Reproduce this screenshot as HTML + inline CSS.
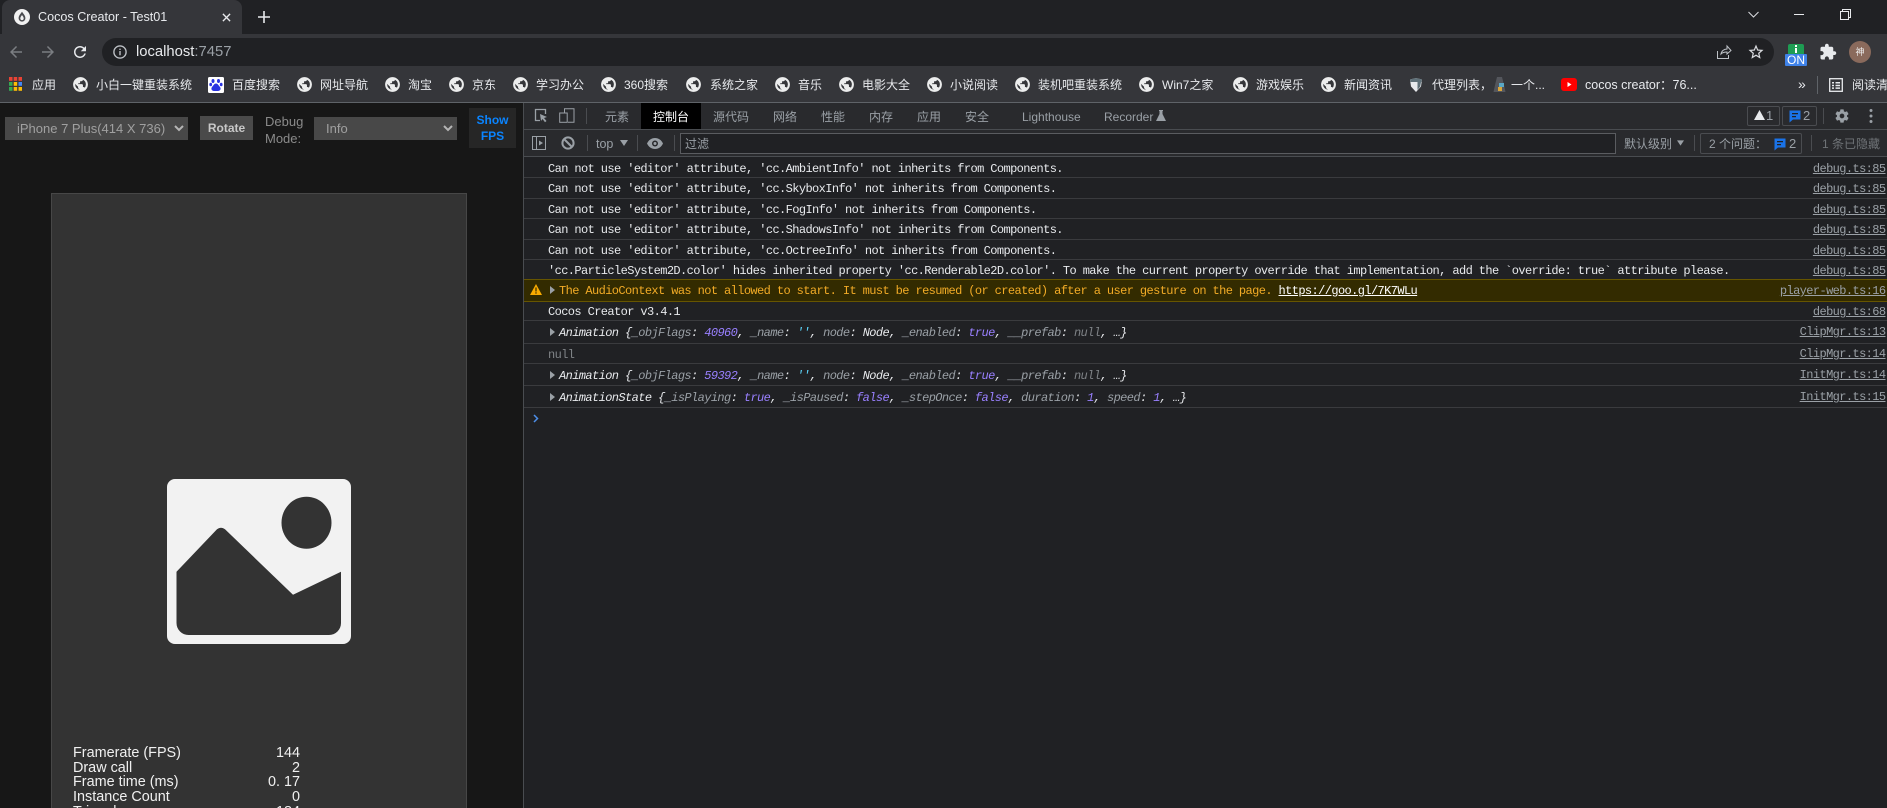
<!DOCTYPE html>
<html><head><meta charset="utf-8"><title>Cocos Creator - Test01</title>
<style>
html,body{margin:0;padding:0;width:1887px;height:808px;overflow:hidden;background:#202124}
body{position:relative;font-family:"Liberation Sans","Noto Sans CJK SC",sans-serif;font-size:12px;color:#e8eaed}
div,span.a,svg.a{position:absolute}
.t{position:absolute;white-space:nowrap;line-height:16px;height:16px}
.bm{color:#e8eaed;font-size:12px;top:77px}
.g{position:absolute;top:76px;width:17px;height:17px}
.dt{color:#9aa0a6;font-size:12px;top:109px}
.l{position:absolute;left:548px;white-space:pre;font-family:"Liberation Mono",monospace;font-size:12px;letter-spacing:-.6px;line-height:16px;height:16px;color:#e8eaed}
.li{font-style:italic}
.r{position:absolute;right:1.500px;white-space:pre;font-family:"Liberation Mono",monospace;font-size:12px;letter-spacing:-.6px;line-height:16px;color:#9aa0a6;text-decoration:underline}
.h{position:absolute;left:524px;right:0;height:1px;background:#3a3b3e}
.p{color:#9aa0a6}.n{color:#9980ff}.s{color:#5cd5fb}.w{color:#e8eaed}.k{color:#7f8387}
.arr{position:absolute;left:550px;width:0;height:0;border-left:5px solid #9aa0a6;border-top:4px solid transparent;border-bottom:4px solid transparent}
.sep{position:absolute;width:1px;background:#4a4c50}
.st{position:absolute;left:73px;color:#f0f0f0;font-size:14.4px;line-height:15px;white-space:nowrap}
.sv{position:absolute;right:1587px;color:#f0f0f0;font-size:14.4px;line-height:15px;white-space:pre}
.sel{position:absolute;background:#484848;top:117px;height:23px;color:#a0a0a0;font-size:13px;line-height:23px}
</style></head><body>
<svg width="0" height="0" style="position:absolute"><defs>
<symbol id="globe" viewBox="0 0 24 24"><path fill="#eceded" stroke="#eceded" stroke-width=".9" d="M12 2C6.48 2 2 6.48 2 12s4.48 10 10 10 10-4.48 10-10S17.52 2 12 2zm-1 17.93c-3.95-.49-7-3.85-7-7.93 0-.62.08-1.21.21-1.79L9 15v1c0 1.1.9 2 2 2v1.93zm6.9-2.54c-.26-.81-1-1.39-1.9-1.39h-1v-3c0-.55-.45-1-1-1H8v-2h2c.55 0 1-.45 1-1V7h2c1.1 0 2-.9 2-2v-.41c2.93 1.19 5 4.06 5 7.41 0 2.08-.8 3.97-2.1 5.39z"/></symbol>
<symbol id="msg" viewBox="0 0 12 13"><path fill="#1a73e8" d="M.5.5h11v9H4L.5 12.500z"/><path fill="#202124" d="M3 3h6v1.300H3zM3 6h4v1.300H3z"/></symbol>
</defs></svg>

<!-- tab strip -->
<div style="left:0;top:0;width:1887px;height:34px;background:#202124"></div>
<div style="left:2px;top:0;width:240px;height:34px;background:#35363a;border-radius:8px 8px 0 0"></div>
<svg class="a" style="left:14px;top:9px" width="16" height="16" viewBox="0 0 16 16"><circle cx="8" cy="8" r="8" fill="#f1f1f1"/><path d="M8 2.8C6.2 5.2 4.6 7 4.6 9.2a3.4 3.4 0 0 0 6.8 0C11.4 7 9.8 5.2 8 2.8z" fill="#4a4b4f"/><path d="M8 6C7 7.4 6.3 8.3 6.3 9.4a1.7 1.7 0 0 0 3.4 0C9.7 8.3 9 7.4 8 6z" fill="#f1f1f1"/></svg>
<span class="t" style="left:38px;top:9px;font-size:12.6px;color:#e8eaed">Cocos Creator - Test01</span>
<svg class="a" style="left:222px;top:13px" width="9" height="9" viewBox="0 0 10 10"><path d="M1 1l8 8M9 1L1 9" stroke="#e8eaed" stroke-width="1.5"/></svg>
<svg class="a" style="left:258px;top:11px" width="12" height="12" viewBox="0 0 12 12"><path d="M6 0v12M0 6h12" stroke="#e8eaed" stroke-width="1.6"/></svg>
<svg class="a" style="left:1748px;top:11px" width="11" height="7" viewBox="0 0 11 7"><path d="M.5 1l5 5 5-5" stroke="#dadce0" fill="none"/></svg>
<div style="left:1794px;top:14px;width:10px;height:1px;background:#e8eaed"></div>
<svg class="a" style="left:1840px;top:9px" width="11" height="11" viewBox="0 0 11 11"><path d="M.5 2.500h8v8h-8zM2.500 2.500v-2h8v8h-2" stroke="#e8eaed" fill="none"/></svg>

<!-- toolbar -->
<div style="left:0;top:34px;width:1887px;height:68px;background:#35363a"></div>
<div style="left:102px;top:38px;width:1672px;height:28px;background:#202124;border-radius:14px"></div>
<svg class="a" style="left:7px;top:43px" width="18" height="18" viewBox="0 0 24 24"><path fill="#7b7e82" d="M20 11H7.83l5.59-5.59L12 4l-8 8 8 8 1.41-1.41L7.83 13H20v-2z"/></svg>
<svg class="a" style="left:39px;top:43px" width="18" height="18" viewBox="0 0 24 24"><path fill="#7b7e82" d="M4 11h12.17l-5.59-5.59L12 4l8 8-8 8-1.41-1.41L16.17 13H4v-2z"/></svg>
<svg class="a" style="left:71px;top:43px" width="18" height="18" viewBox="0 0 24 24"><path fill="#e8eaed" d="M17.65 6.35C16.2 4.9 14.21 4 12 4c-4.42 0-7.99 3.58-7.99 8s3.57 8 7.99 8c3.73 0 6.84-2.55 7.73-6h-2.08c-.82 2.33-3.04 4-5.65 4-3.31 0-6-2.69-6-6s2.69-6 6-6c1.66 0 3.14.69 4.22 1.78L13 11h7V4l-2.35 2.35z"/></svg>
<svg class="a" style="left:113px;top:45px" width="14" height="14" viewBox="0 0 14 14"><circle cx="7" cy="7" r="6.1" stroke="#bdc1c6" stroke-width="1.4" fill="none"/><path d="M6.3 6h1.4v4.2H6.3zM6.3 3.6h1.4V5H6.3z" fill="#bdc1c6"/></svg>
<span class="t" style="left:136px;top:44px;font-size:14.8px;color:#e8eaed">localhost<span style="color:#9aa0a6">:7457</span></span>
<svg class="a" style="left:1716px;top:44px" width="16" height="16" viewBox="0 0 16 16"><path d="M1.5 7v7.5h11V11M5 10c.5-3 3-5 6-5V2l4 4.5L11 10V8C8.500 8 6.500 8.500 5 10z" stroke="#bdc1c6" fill="none" stroke-width="1"/></svg>
<svg class="a" style="left:1747px;top:43px" width="18" height="18" viewBox="0 0 24 24"><path fill="#dadce0" d="M22 9.24l-7.19-.62L12 2 9.19 8.63 2 9.24l5.46 4.73L5.82 21 12 17.27 18.18 21l-1.63-7.03L22 9.24zM12 15.4l-3.76 2.27 1-4.28-3.32-2.88 4.38-.38L12 6.100l1.71 4.04 4.38.38-3.32 2.88 1 4.28L12 15.4z"/></svg>
<div style="left:1788px;top:44px;width:16px;height:10px;background:#1e9c53;border-radius:2px 2px 0 0"></div>
<div style="left:1795px;top:45px;width:2px;height:2px;background:#fff"></div>
<div style="left:1795px;top:48px;width:2px;height:5px;background:#fff"></div>
<div style="left:1785px;top:54px;width:22px;height:12px;background:#3f82e8;border-radius:1px;color:#fff;font-size:12px;line-height:12px;text-align:center">ON</div>
<svg class="a" style="left:1819px;top:43px" width="18" height="18" viewBox="0 0 24 24"><path fill="#e8eaed" d="M20.5 11H19V7c0-1.100-.9-2-2-2h-4V3.500C13 2.120 11.880 1 10.500 1S8 2.120 8 3.500V5H4c-1.100 0-1.990.9-1.990 2v3.800H3.500c1.490 0 2.700 1.210 2.700 2.700s-1.210 2.700-2.700 2.700H2V20c0 1.100.9 2 2 2h3.800v-1.500c0-1.490 1.210-2.700 2.700-2.700 1.490 0 2.700 1.210 2.700 2.700V22H17c1.100 0 2-.9 2-2v-4h1.500c1.380 0 2.500-1.120 2.500-2.500S21.880 11 20.500 11z"/></svg>
<div style="left:1849px;top:41px;width:22px;height:22px;border-radius:50%;background:#8a6a5c;color:#eee;font-size:9px;line-height:22px;text-align:center">神</div>

<!-- bookmarks -->
<svg class="a" style="left:9px;top:77px" width="13" height="14" viewBox="0 0 13 14">
<rect x="0" y="0" width="3.500" height="3.800" fill="#ea4335"/><rect x="4.700" y="0" width="3.500" height="3.800" fill="#ea4335"/><rect x="9.500" y="0" width="3.500" height="3.800" fill="#ea4335"/>
<rect x="0" y="5" width="3.500" height="3.800" fill="#34a853"/><rect x="4.700" y="5" width="3.500" height="3.800" fill="#fbbc05"/><rect x="9.500" y="5" width="3.500" height="3.800" fill="#4285f4"/>
<rect x="0" y="10" width="3.500" height="3.800" fill="#34a853"/><rect x="4.700" y="10" width="3.500" height="3.800" fill="#fbbc05"/><rect x="9.500" y="10" width="3.500" height="3.800" fill="#fbbc05"/></svg>
<span class="t bm" style="left:32px">应用</span>
<svg class="g" style="left:72px"><use href="#globe"/></svg><span class="t bm" style="left:96px">小白一键重装系统</span>
<svg class="a" style="left:208px;top:77px" width="16" height="16" viewBox="0 0 16 16"><rect width="16" height="16" rx="1.500" fill="#fff"/><ellipse cx="5" cy="4" rx="1.500" ry="2" fill="#2932e1"/><ellipse cx="10.500" cy="4" rx="1.500" ry="2" fill="#2932e1"/><ellipse cx="2.700" cy="7.500" rx="1.400" ry="1.800" fill="#2932e1"/><ellipse cx="13.200" cy="7.500" rx="1.400" ry="1.800" fill="#2932e1"/><path d="M8 6.500c-2 0-2.500 2-4 3.500-1.500 2 0 4 2 4h4c2 0 3.500-2 2-4-1.500-1.500-2-3.500-4-3.500z" fill="#2932e1"/></svg>
<span class="t bm" style="left:232px">百度搜索</span>
<svg class="g" style="left:296px"><use href="#globe"/></svg><span class="t bm" style="left:320px">网址导航</span>
<svg class="g" style="left:384px"><use href="#globe"/></svg><span class="t bm" style="left:408px">淘宝</span>
<svg class="g" style="left:448px"><use href="#globe"/></svg><span class="t bm" style="left:472px">京东</span>
<svg class="g" style="left:512px"><use href="#globe"/></svg><span class="t bm" style="left:536px">学习办公</span>
<svg class="g" style="left:600px"><use href="#globe"/></svg><span class="t bm" style="left:624px">360搜索</span>
<svg class="g" style="left:685px"><use href="#globe"/></svg><span class="t bm" style="left:710px">系统之家</span>
<svg class="g" style="left:774px"><use href="#globe"/></svg><span class="t bm" style="left:798px">音乐</span>
<svg class="g" style="left:838px"><use href="#globe"/></svg><span class="t bm" style="left:862px">电影大全</span>
<svg class="g" style="left:926px"><use href="#globe"/></svg><span class="t bm" style="left:950px">小说阅读</span>
<svg class="g" style="left:1014px"><use href="#globe"/></svg><span class="t bm" style="left:1038px">装机吧重装系统</span>
<svg class="g" style="left:1138px"><use href="#globe"/></svg><span class="t bm" style="left:1162px">Win7之家</span>
<svg class="g" style="left:1232px"><use href="#globe"/></svg><span class="t bm" style="left:1256px">游戏娱乐</span>
<svg class="g" style="left:1320px"><use href="#globe"/></svg><span class="t bm" style="left:1344px">新闻资讯</span>
<svg class="a" style="left:1409px;top:77px" width="14" height="16" viewBox="0 0 14 16"><path d="M1 2.500L7 1l6 1.500-1 7L7 15 2 9.500z" fill="#e8eaed"/><path d="M1 2.500L7 1l6 1.500-.5 2.500h-11zM8.500 5H12l-.8 4.500L8.500 13z" fill="#5f7078"/></svg>
<span class="t bm" style="left:1432px">代理列表，</span>
<svg class="a" style="left:1493px;top:76px" width="13" height="17" viewBox="0 0 13 17"><path d="M4 1h5l1.500 6 2 9H.5l2-9z" fill="#54565c"/><rect x="6" y="7" width="5" height="4" fill="#5aa7c5"/><rect x="5" y="11" width="4" height="4" fill="#d9a53a"/></svg>
<span class="t bm" style="left:1511px">一个...</span>
<svg class="a" style="left:1561px;top:78px" width="16" height="13" viewBox="0 0 16 13"><rect width="16" height="13" rx="3" fill="#f00"/><path d="M6.500 4v5l4-2.500z" fill="#fff"/></svg>
<span class="t bm" style="left:1585px;font-size:12.500px">cocos creator：76...</span>
<span class="t" style="left:1798px;top:76px;font-size:14px;color:#e8eaed">»</span>
<div class="sep" style="left:1817px;top:76px;height:18px;background:#5f6368"></div>
<svg class="a" style="left:1829px;top:78px" width="14" height="14" viewBox="0 0 14 14"><rect x=".7" y=".7" width="12.600" height="12.600" fill="none" stroke="#e8eaed" stroke-width="1.300"/><path d="M3 4h2v1.500H3zM6.500 4H11v1.500H6.500zM3 6.700h2v1.500H3zM6.500 6.700H11v1.500H6.500zM3 9.400h2v1.500H3zM6.500 9.400H11v1.500H6.500z" fill="#e8eaed"/></svg>
<span class="t bm" style="left:1852px">阅读清单</span>
<div style="left:0;top:102px;width:1887px;height:1px;background:#5f6368"></div>

<!-- left panel -->
<div style="left:0;top:103px;width:523px;height:705px;background:#171717"></div>
<div class="sel" style="left:5px;width:183px"><span style="margin-left:12px">iPhone 7 Plus(414 X 736)</span></div>
<svg class="a" style="left:174px;top:125px" width="10" height="7" viewBox="0 0 10 7"><path d="M1 1l4 4 4-4" stroke="#b5b5b5" stroke-width="2" fill="none"/></svg>
<div style="left:200px;top:116px;width:53px;height:24px;background:#4a4a4a;color:#c8c8c8;font-size:12px;font-weight:bold;line-height:24px;text-align:center">Rotate</div>
<span class="t" style="left:265px;top:114px;font-size:13px;color:#8a8a8a">Debug</span>
<span class="t" style="left:265px;top:131px;font-size:13px;color:#8a8a8a">Mode:</span>
<div class="sel" style="left:314px;width:143px"><span style="margin-left:12px">Info</span></div>
<svg class="a" style="left:443px;top:125px" width="10" height="7" viewBox="0 0 10 7"><path d="M1 1l4 4 4-4" stroke="#b5b5b5" stroke-width="2" fill="none"/></svg>
<div style="left:469px;top:108px;width:47px;height:40px;background:#262626;color:#0a84ff;font-size:12px;font-weight:bold;line-height:15.500px;text-align:center"><div style="position:static;padding-top:5px">Show<br>FPS</div></div>
<div style="left:51px;top:193px;width:414px;height:620px;background:#333;border:1px solid #474747"></div>
<svg class="a" style="left:167px;top:479px" width="184" height="165" viewBox="0 0 184 165"><path fill-rule="evenodd" fill="#f2f2f2" d="M8 0h168a8 8 0 0 1 8 8v149a8 8 0 0 1-8 8H8a8 8 0 0 1-8-8V8a8 8 0 0 1 8-8zM9.500 92.700V144a12 12 0 0 0 12 12H162a12 12 0 0 0 12-12V92.700l-48 23-68-65.400q-4-3-8 0z"/><ellipse cx="139.500" cy="43.700" rx="25" ry="26" fill="#333"/></svg>
<span class="st" style="top:746px">Framerate (FPS)</span><span class="sv" style="top:746px">144</span>
<span class="st" style="top:761px">Draw call</span><span class="sv" style="top:761px">2</span>
<span class="st" style="top:775px">Frame time (ms)</span><span class="sv" style="top:775px">0. 17</span>
<span class="st" style="top:790px">Instance Count</span><span class="sv" style="top:790px">0</span>
<span class="st" style="top:805px">Triangle</span><span class="sv" style="top:805px">184</span>

<!-- devtools -->
<div style="left:523px;top:103px;width:1px;height:705px;background:#494c50"></div>
<div style="left:524px;top:103px;width:1363px;height:26px;background:#292a2d"></div>
<div style="left:524px;top:129px;width:1363px;height:1px;background:#494c50"></div>
<div style="left:524px;top:130px;width:1363px;height:26px;background:#292a2d"></div>
<div style="left:524px;top:156px;width:1363px;height:1px;background:#494c50"></div>
<svg class="a" style="left:534px;top:108px" width="14" height="15" viewBox="0 0 14 15"><path d="M6 12.500H1.500v-11h10V6" stroke="#9aa0a6" stroke-width="1.300" fill="none"/><path d="M6 6l7 3-3 1 2.500 3-1.500 1.300L8.500 11 7 13z" fill="#9aa0a6"/></svg>
<svg class="a" style="left:559px;top:108px" width="16" height="15" viewBox="0 0 16 15"><path d="M5.500 5V.7h9.500v13.600H9" stroke="#9aa0a6" fill="none"/><rect x=".7" y="5" width="7.500" height="9.300" stroke="#9aa0a6" fill="none"/></svg>
<div class="sep" style="left:586px;top:108px;height:16px"></div>
<span class="t dt" style="left:605px">元素</span>
<div style="left:641px;top:103px;width:60px;height:26px;background:#000"></div>
<span class="t dt" style="left:653px;color:#fff">控制台</span>
<span class="t dt" style="left:713px">源代码</span>
<span class="t dt" style="left:773px">网络</span>
<span class="t dt" style="left:821px">性能</span>
<span class="t dt" style="left:869px">内存</span>
<span class="t dt" style="left:917px">应用</span>
<span class="t dt" style="left:965px">安全</span>
<span class="t dt" style="left:1022px">Lighthouse</span>
<span class="t dt" style="left:1104px">Recorder</span>
<svg class="a" style="left:1156px;top:110px" width="10" height="11" viewBox="0 0 10 11"><path d="M3 0h4v1H6.500v3L10 11H0l3.500-7V1H3z" fill="#9aa0a6"/></svg>
<div style="left:1747px;top:106px;width:31px;height:18px;border:1px solid #4a4c50;border-radius:2px"></div>
<svg class="a" style="left:1754px;top:110px" width="11" height="10" viewBox="0 0 11 10"><path d="M5.500 0L11 10H0z" fill="#e8eaed"/></svg>
<span class="t" style="left:1766px;top:108px;color:#9aa0a6;font-size:13px">1</span>
<div style="left:1782px;top:106px;width:33px;height:18px;border:1px solid #4a4c50;border-radius:2px"></div>
<svg class="a" style="left:1789px;top:110px" width="12" height="13"><use href="#msg"/></svg>
<span class="t" style="left:1803px;top:108px;color:#9aa0a6;font-size:13px">2</span>
<div class="sep" style="left:1823px;top:108px;height:16px"></div>
<svg class="a" style="left:1834px;top:108px" width="16" height="16" viewBox="0 0 24 24"><path fill="#9aa0a6" d="M19.430 12.980c.04-.32.07-.64.07-.98s-.03-.66-.07-.98l2.110-1.650c.19-.15.24-.42.12-.64l-2-3.460c-.12-.22-.39-.3-.61-.22l-2.490 1c-.52-.4-1.080-.73-1.690-.98l-.38-2.650C14.460 2.180 14.250 2 14 2h-4c-.25 0-.46.18-.49.42l-.38 2.650c-.61.25-1.170.59-1.690.98l-2.490-1c-.23-.09-.49 0-.61.22l-2 3.460c-.13.22-.07.49.12.64l2.110 1.650c-.04.32-.07.65-.07.98s.03.66.07.98l-2.110 1.650c-.19.15-.24.42-.12.64l2 3.460c.12.22.39.3.61.22l2.490-1c.52.4 1.080.73 1.690.98l.38 2.650c.03.24.24.42.49.42h4c.25 0 .46-.18.49-.42l.38-2.650c.61-.25 1.170-.59 1.690-.98l2.490 1c.23.09.49 0 .61-.22l2-3.460c.12-.22.07-.49-.12-.64l-2.110-1.650zM12 15.500c-1.930 0-3.500-1.570-3.500-3.500s1.570-3.500 3.500-3.500 3.500 1.570 3.500 3.500-1.570 3.500-3.500 3.500z"/></svg>
<svg class="a" style="left:1869px;top:108px" width="4" height="16" viewBox="0 0 4 16"><circle cx="2" cy="2.500" r="1.500" fill="#9aa0a6"/><circle cx="2" cy="8" r="1.500" fill="#9aa0a6"/><circle cx="2" cy="13.500" r="1.500" fill="#9aa0a6"/></svg>

<svg class="a" style="left:532px;top:136px" width="14" height="14" viewBox="0 0 14 14"><rect x=".5" y=".5" width="13" height="13" fill="none" stroke="#9aa0a6"/><path d="M4.500.5v13" stroke="#9aa0a6"/><path d="M7 4.500l4 2.500-4 2.500z" fill="#9aa0a6"/></svg>
<svg class="a" style="left:561px;top:136px" width="14" height="14" viewBox="0 0 14 14"><circle cx="7" cy="7" r="5.600" fill="none" stroke="#9aa0a6" stroke-width="2"/><path d="M3 3l8 8" stroke="#9aa0a6" stroke-width="2"/></svg>
<div class="sep" style="left:587px;top:135px;height:16px"></div>
<span class="t dt" style="left:596px;top:136px;font-size:12.500px">top</span>
<svg class="a" style="left:620px;top:140px" width="8" height="6" viewBox="0 0 8 6"><path d="M0 0h8L4 6z" fill="#9aa0a6"/></svg>
<div class="sep" style="left:637px;top:135px;height:16px"></div>
<svg class="a" style="left:647px;top:138px" width="16" height="11" viewBox="0 0 16 11"><path d="M8 0C4.500 0 1.500 2.200 0 5.500 1.500 8.800 4.500 11 8 11s6.500-2.200 8-5.500C14.500 2.200 11.500 0 8 0z" fill="#9aa0a6"/><circle cx="8" cy="5.500" r="3" fill="#292a2d"/><circle cx="8" cy="5.500" r="1.500" fill="#9aa0a6"/></svg>
<div class="sep" style="left:674px;top:135px;height:16px"></div>
<div style="left:680px;top:133px;width:934px;height:19px;background:#202124;border:1px solid #5a5c60"></div>
<span class="t dt" style="left:685px;top:136px">过滤</span>
<span class="t dt" style="left:1624px;top:136px">默认级别</span>
<svg class="a" style="left:1677px;top:140px" width="7" height="6" viewBox="0 0 8 6"><path d="M0 0h8L4 6z" fill="#9aa0a6"/></svg>
<div class="sep" style="left:1694px;top:135px;height:16px"></div>
<div style="left:1700px;top:133px;width:100px;height:19px;border:1px solid #4a4c50;border-radius:2px"></div>
<span class="t dt" style="left:1709px;top:136px">2 个问题：</span>
<svg class="a" style="left:1774px;top:138px" width="12" height="13"><use href="#msg"/></svg>
<span class="t" style="left:1789px;top:136px;color:#9aa0a6;font-size:13px">2</span>
<div class="sep" style="left:1811px;top:135px;height:16px"></div>
<span class="t dt" style="left:1822px;top:136px;color:#6f7377">1 条已隐藏</span>

<!-- console rows -->
<div class="h" style="top:177px"></div><div class="h" style="top:198px"></div><div class="h" style="top:218px"></div><div class="h" style="top:239px"></div><div class="h" style="top:259px"></div>
<div style="left:524px;top:279px;width:1363px;height:21px;background:#332b00;border-top:1px solid #665500;border-bottom:1px solid #665500"></div>
<div class="h" style="top:320px"></div><div class="h" style="top:343px"></div><div class="h" style="top:363px"></div><div class="h" style="top:385px"></div><div class="h" style="top:407px"></div>

<span class="l" style="top:161px">Can not use 'editor' attribute, 'cc.AmbientInfo' not inherits from Components.</span><span class="r" style="top:161px">debug.ts:85</span>
<span class="l" style="top:181px">Can not use 'editor' attribute, 'cc.SkyboxInfo' not inherits from Components.</span><span class="r" style="top:181px">debug.ts:85</span>
<span class="l" style="top:202px">Can not use 'editor' attribute, 'cc.FogInfo' not inherits from Components.</span><span class="r" style="top:202px">debug.ts:85</span>
<span class="l" style="top:222px">Can not use 'editor' attribute, 'cc.ShadowsInfo' not inherits from Components.</span><span class="r" style="top:222px">debug.ts:85</span>
<span class="l" style="top:243px">Can not use 'editor' attribute, 'cc.OctreeInfo' not inherits from Components.</span><span class="r" style="top:243px">debug.ts:85</span>
<span class="l" style="top:263px">'cc.ParticleSystem2D.color' hides inherited property 'cc.Renderable2D.color'. To make the current property override that implementation, add the `override: true` attribute please.</span><span class="r" style="top:263px">debug.ts:85</span>

<svg class="a" style="left:530px;top:284px" width="12" height="11" viewBox="0 0 12 11"><path d="M6 0l6 11H0z" fill="#f9ab00"/><path d="M5.400 3.500h1.200v4H5.400zM5.400 8.300h1.200v1.300H5.400z" fill="#332b00"/></svg>
<div class="arr" style="top:286px"></div>
<span class="l" style="left:559px;top:283px;color:#f2ab26">The AudioContext was not allowed to start. It must be resumed (or created) after a user gesture on the page. <span style="color:#fff;text-decoration:underline">https://goo.gl/7K7WLu</span></span><span class="r" style="top:283px">player-web.ts:16</span>

<span class="l" style="top:304px">Cocos Creator v3.4.1</span><span class="r" style="top:304px">debug.ts:68</span>

<div class="arr" style="top:328px"></div>
<span class="l li" style="left:559px;top:325px">Animation {<span class="p">_objFlags</span>: <span class="n">40960</span>, <span class="p">_name</span>: <span class="s">''</span>, <span class="p">node</span>: <span class="w">Node</span>, <span class="p">_enabled</span>: <span class="n">true</span>, <span class="p">__prefab</span>: <span class="k">null</span>, …}</span><span class="r" style="top:324px">ClipMgr.ts:13</span>

<span class="l" style="top:347px;color:#7f8387">null</span><span class="r" style="top:346px">ClipMgr.ts:14</span>

<div class="arr" style="top:371px"></div>
<span class="l li" style="left:559px;top:368px">Animation {<span class="p">_objFlags</span>: <span class="n">59392</span>, <span class="p">_name</span>: <span class="s">''</span>, <span class="p">node</span>: <span class="w">Node</span>, <span class="p">_enabled</span>: <span class="n">true</span>, <span class="p">__prefab</span>: <span class="k">null</span>, …}</span><span class="r" style="top:367px">InitMgr.ts:14</span>

<div class="arr" style="top:393px"></div>
<span class="l li" style="left:559px;top:390px">AnimationState {<span class="p">_isPlaying</span>: <span class="n">true</span>, <span class="p">_isPaused</span>: <span class="n">false</span>, <span class="p">_stepOnce</span>: <span class="n">false</span>, <span class="p">duration</span>: <span class="n">1</span>, <span class="p">speed</span>: <span class="n">1</span>, …}</span><span class="r" style="top:389px">InitMgr.ts:15</span>

<svg class="a" style="left:533px;top:414px" width="6" height="9" viewBox="0 0 6 9"><path d="M1 1l3.500 3.500L1 8" stroke="#4d8ee8" stroke-width="1.500" fill="none"/></svg>
</body></html>
